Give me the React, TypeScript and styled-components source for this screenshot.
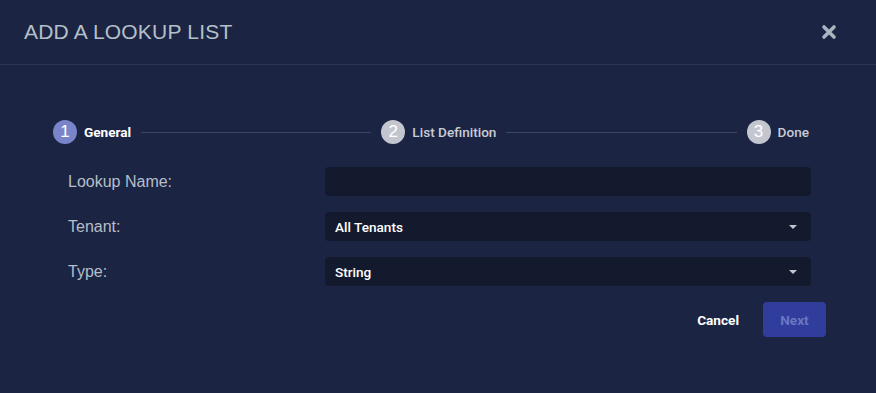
import { Fragment } from "react";
import styled, { createGlobalStyle } from "styled-components";

const GlobalStyle = createGlobalStyle`
  html, body {
    margin: 0;
    background: #1c2444;
  }
  body {
    font-family: "Liberation Sans", Arial, sans-serif;
  }
`

const Dialog = styled.div`
  width: 876px;
  height: 393px;
  background: #1c2444;
  box-sizing: border-box;
`
const Header = styled.div`
  height: 64px;
  display: flex;
  align-items: center;
  justify-content: space-between;
  padding: 0 38px 0 24px;
  border-bottom: 1px solid #2b3452;
`
const Title = styled.h2`
  margin: 0;
  font-family: "Liberation Sans", Arial, sans-serif;
  font-weight: 400;
  font-size: 21px;
  color: #b4c0c8;
  letter-spacing: 0.2px;
`
const CloseButton = styled.button`
  background: none;
  border: none;
  padding: 0;
  width: 18px;
  height: 18px;
  display: flex;
  align-items: center;
  justify-content: center;
  cursor: pointer;
`
const Stepper = styled.div`
  display: flex;
  align-items: center;
  margin-top: 55px;
  padding: 0 67px 0 53px;
  height: 24px;
`
const Step = styled.div`
  display: flex;
  align-items: center;
  gap: 7px;
  flex-shrink: 0;
`
const StepCircle = styled.div<{ active?: boolean }>`
  width: 24px;
  height: 24px;
  border-radius: 50%;
  background: ${p => (p.active ? "#7a85c9" : "#c3c6cf")};
  color: #ffffff;
  font-family: "Liberation Sans", Arial, sans-serif;
  font-size: 17px;
  display: flex;
  align-items: center;
  justify-content: center;
`
const StepLabel = styled.span<{ active?: boolean }>`
  font-family: Roboto, "Liberation Sans", sans-serif;
  font-size: 13.6px;
  font-weight: ${p => (p.active ? 700 : 500)};
  color: ${p => (p.active ? "#ffffff" : "#c8ccd6")};
`
const StepLine = styled.div`
  flex: 1;
  height: 1px;
  background: #3b4564;
  margin: 0 10px;
`
const Form = styled.div`
  display: flex;
  flex-direction: column;
  gap: 16px;
  margin-top: 23px;
  padding: 0 65px 0 68px;
`
const Row = styled.div`
  display: grid;
  grid-template-columns: 257px 1fr;
  align-items: center;
  height: 29px;
`
const Label = styled.label`
  font-family: "Liberation Sans", Arial, sans-serif;
  font-size: 16px;
  color: #b4bfc8;
`
const Field = styled.div`
  height: 29px;
  background: #141a2e;
  border-radius: 4px;
  display: flex;
  align-items: center;
  justify-content: space-between;
  padding: 0 14px 0 10px;
  font-family: Roboto, "Liberation Sans", sans-serif;
  font-size: 13.6px;
  font-weight: 500;
  color: #ffffff;
`
const Caret = styled.span`
  width: 0;
  height: 0;
  border-left: 4px solid transparent;
  border-right: 4px solid transparent;
  border-top: 4px solid #c3c6cf;
`
const Actions = styled.div`
  display: flex;
  justify-content: flex-end;
  align-items: center;
  gap: 10px;
  margin-top: 16px;
  padding-right: 50px;
`
const TextButton = styled.button`
  background: none;
  border: none;
  font-family: Roboto, "Liberation Sans", sans-serif;
  font-size: 13.6px;
  font-weight: 700;
  color: #ffffff;
  padding: 0 14px;
  height: 35px;
`
const PrimaryButton = styled.button`
  width: 63px;
  height: 35px;
  border: none;
  border-radius: 4px;
  background: #313d9c;
  color: #6a76c2;
  font-family: Roboto, "Liberation Sans", sans-serif;
  font-size: 13.6px;
  font-weight: 700;
`

const steps = [
  { n: 1, label: "General" },
  { n: 2, label: "List Definition" },
  { n: 3, label: "Done" },
]

function App() {
  return (
    <>
      <GlobalStyle />
      <Dialog>
        <Header>
          <Title>ADD A LOOKUP LIST</Title>
          <CloseButton aria-label="close">
            <svg width="16" height="16" viewBox="0 0 16 16">
              <path d="M3 3 L13 13 M13 3 L3 13" stroke="#a9b5bf" strokeWidth="3.6" strokeLinecap="round" />
            </svg>
          </CloseButton>
        </Header>

        <Stepper>
          {steps.map((s, i) => (
            <Fragment key={s.n}>
              {i > 0 && <StepLine />}
              <Step>
                <StepCircle active={i === 0}>{s.n}</StepCircle>
                <StepLabel active={i === 0}>{s.label}</StepLabel>
              </Step>
            </Fragment>
          ))}
        </Stepper>

        <Form>
          <Row>
            <Label>Lookup Name:</Label>
            <Field />
          </Row>
          <Row>
            <Label>Tenant:</Label>
            <Field>All Tenants<Caret /></Field>
          </Row>
          <Row>
            <Label>Type:</Label>
            <Field>String<Caret /></Field>
          </Row>
        </Form>

        <Actions>
          <TextButton>Cancel</TextButton>
          <PrimaryButton>Next</PrimaryButton>
        </Actions>
      </Dialog>
    </>
  )
}

export default App
